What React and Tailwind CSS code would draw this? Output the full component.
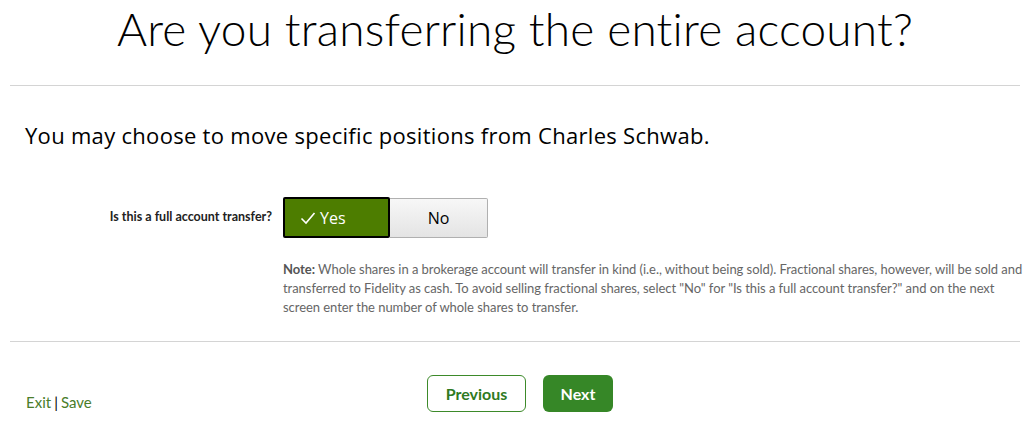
import { useState } from "react";

export default function App() {
  const [full, setFull] = useState(true);

  return (
    <div className="w-[1030px] h-[422px] bg-white px-[10px] font-['Lato',sans-serif] text-black overflow-hidden">
      <h1 className="h-[85px] text-center text-[46px] font-light leading-[58px] tracking-[0.2px]">
        Are you transferring the entire account?
      </h1>
      <div className="border-t border-[#d4d4d4]" />

      <div className="px-[15px] pt-[35px]">
        <h2 className="text-[22px] leading-[28px] font-['Open_Sans',sans-serif] tracking-[0.3px]">
          You may choose to move specific positions from Charles Schwab.
        </h2>
      </div>

      <div className="flex items-center mt-[48px]">
        <label className="w-[273px] pr-[11px] text-right text-[12.5px] font-bold text-[#222]">
          Is this a full account transfer?
        </label>
        <div className="flex">
          <button
            onClick={() => setFull(true)}
            className={
              full
                ? "w-[107px] h-[41px] flex items-center pl-[15px] gap-[4px] bg-[#4d7d00] text-white text-[16px] border-2 border-black rounded-[2px] font-['Open_Sans',sans-serif]"
                : "w-[107px] h-[41px] flex items-center justify-center bg-gradient-to-b from-[#fafafa] to-[#e6e6e6] text-black text-[16px] border border-[#aaa] font-['Open_Sans',sans-serif]"
            }
          >
            {full && (
              <svg width="16" height="14" viewBox="0 0 16 14" fill="none">
                <path d="M1.5 7.5 L6 12 L14.5 2" stroke="white" strokeWidth="1.6" />
              </svg>
            )}
            Yes
          </button>
          <button
            onClick={() => setFull(false)}
            className={
              !full
                ? "w-[98px] h-[41px] flex items-center justify-center bg-[#4d7d00] text-white text-[16px] border-2 border-black font-['Open_Sans',sans-serif]"
                : "w-[98px] h-[40px] mt-[1px] flex items-center justify-center bg-gradient-to-b from-[#f7f7f7] to-[#e4e4e4] text-black text-[16px] border border-[#b0b0b0] border-l-0 rounded-r-[2px] font-['Open_Sans',sans-serif]"
            }
          >
            No
          </button>
        </div>
      </div>

      <p className="ml-[273px] mt-[22px] w-[745px] text-[13px] leading-[19px] text-[#666] tracking-[-0.05px]">
        <b className="text-[#555]">Note:</b> Whole shares in a brokerage account will transfer in kind (i.e., without being sold). Fractional shares, however, will be sold and transferred to Fidelity as cash. To avoid selling fractional shares, select "No" for "Is this a full account transfer?" and on the next screen enter the number of whole shares to transfer.
      </p>

      <div className="border-t border-[#d4d4d4] mt-[24px]" />

      <div className="relative flex items-end h-[72px]">
        <div className="pl-[16px] pb-[1px] text-[15px] text-[#4a7d2a]">
          <a href="#">Exit</a>
          <span className="text-black mx-[3px]">|</span>
          <a href="#">Save</a>
        </div>
        <div className="absolute left-[417px] top-[33px] flex gap-[17px]">
          <button className="w-[99px] h-[37px] rounded-[6px] border border-[#3d8a2a] bg-white text-[#2f7a1f] text-[16px] font-bold">
            Previous
          </button>
          <button className="w-[70px] h-[37px] rounded-[6px] bg-[#368727] text-white text-[16px] font-bold">
            Next
          </button>
        </div>
      </div>
    </div>
  );
}
